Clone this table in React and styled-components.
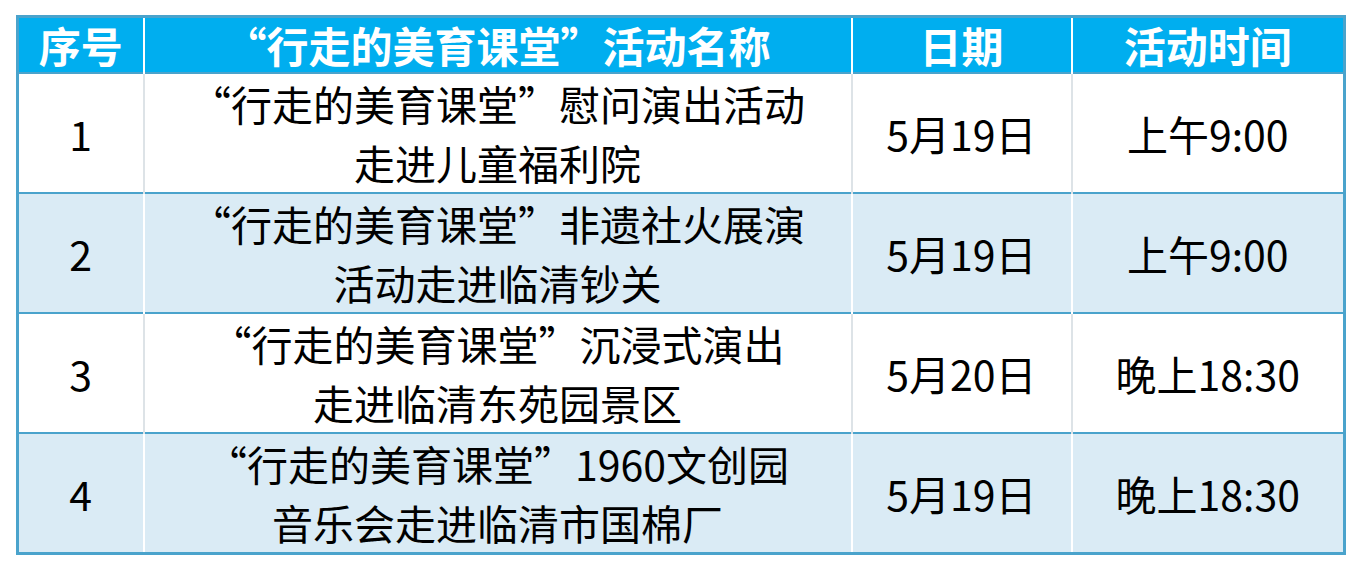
import React from "react";
import styled, { createGlobalStyle } from "styled-components";

const GlobalStyle = createGlobalStyle`
  html, body {
    margin: 0;
    padding: 0;
    background: #ffffff;
  }
  body {
    font-family: "Noto Sans CJK SC", "Noto Sans", sans-serif;
  }
`;

const Page = styled.div`
  width: 1362px;
  height: 572px;
  padding: 15px 0 0 16px;
  box-sizing: border-box;
`;

const Table = styled.table`
  width: 1327px;
  table-layout: fixed;
  border-collapse: collapse;
  border: 3px solid #4aa3cc;
`;

const HeadCell = styled.th`
  height: 54px;
  padding: 0;
  background: #00aeef;
  color: #ffffff;
  font-size: 42px;
  font-weight: 700;
  line-height: 1;
  text-align: center;
  border-left: 2px solid #ffffff;

  &:first-child {
    border-left: none;
  }
`;

const Row = styled.tr`
  background: ${(props) => (props.$alt ? "#daebf5" : "#ffffff")};
  border-top: 2px solid #4aa3cc;
`;

const Cell = styled.td`
  height: 118px;
  padding: 0;
  color: #000000;
  font-size: 41px;
  line-height: 59px;
  text-align: center;
  border-left: 2px solid ${(props) => (props.$alt ? "#ffffff" : "#dde3e7")};

  &:first-child {
    border-left: none;
  }
`;

const Line = styled.span`
  display: block;
  white-space: nowrap;
`;

const events = [
  {
    no: "1",
    name: ["“行走的美育课堂”慰问演出活动", "走进儿童福利院"],
    date: "5月19日",
    time: "上午9:00",
  },
  {
    no: "2",
    name: ["“行走的美育课堂”非遗社火展演", "活动走进临清钞关"],
    date: "5月19日",
    time: "上午9:00",
  },
  {
    no: "3",
    name: ["“行走的美育课堂”沉浸式演出", "走进临清东苑园景区"],
    date: "5月20日",
    time: "晚上18:30",
  },
  {
    no: "4",
    name: ["“行走的美育课堂”1960文创园", "音乐会走进临清市国棉厂"],
    date: "5月19日",
    time: "晚上18:30",
  },
];

export default function App() {
  return (
    <>
      <GlobalStyle />
      <Page>
        <Table>
          <colgroup>
            <col style={{ width: 126 }} />
            <col style={{ width: 708 }} />
            <col style={{ width: 220 }} />
            <col style={{ width: 273 }} />
          </colgroup>
          <thead>
            <tr>
              <HeadCell>序号</HeadCell>
              <HeadCell>“行走的美育课堂”活动名称</HeadCell>
              <HeadCell>日期</HeadCell>
              <HeadCell>活动时间</HeadCell>
            </tr>
          </thead>
          <tbody>
            {events.map((ev, i) => {
              const alt = i % 2 === 1;
              return (
                <Row key={ev.no} $alt={alt}>
                  <Cell $alt={alt}>{ev.no}</Cell>
                  <Cell $alt={alt}>
                    {ev.name.map((line) => (
                      <Line key={line}>{line}</Line>
                    ))}
                  </Cell>
                  <Cell $alt={alt}>{ev.date}</Cell>
                  <Cell $alt={alt}>{ev.time}</Cell>
                </Row>
              );
            })}
          </tbody>
        </Table>
      </Page>
    </>
  );
}
